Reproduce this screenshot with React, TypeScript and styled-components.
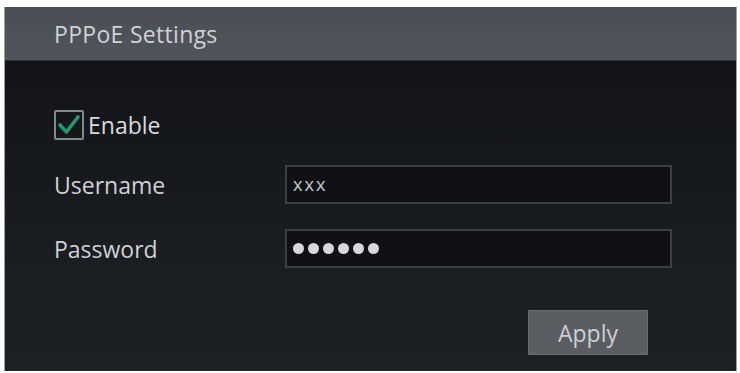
import styled, { createGlobalStyle } from "styled-components";

const GlobalStyle = createGlobalStyle`
  html, body {
    margin: 0;
    padding: 0;
    background: #ffffff;
  }
  body {
    font-family: "Open Sans", "Noto Sans", "Liberation Sans", sans-serif;
  }
`;

const App = () => {
  return (
    <>
      <GlobalStyle />
      <Page>
        <Panel>
          <Header>PPPoE Settings</Header>
          <Body>
            <CheckRow>
              <CheckBox>
                <svg width="24" height="22" viewBox="0 0 24 22">
                  <path
                    d="M3 11 L9.5 18 L21 3"
                    fill="none"
                    stroke="#1f9a6e"
                    strokeWidth="3.6"
                    strokeLinecap="round"
                    strokeLinejoin="round"
                  />
                </svg>
              </CheckBox>
              <CheckLabel>Enable</CheckLabel>
            </CheckRow>
            <FieldRow>
              <FieldLabel>Username</FieldLabel>
              <Field>xxx</Field>
            </FieldRow>
            <FieldRow>
              <FieldLabel>Password</FieldLabel>
              <Field>
                {Array.from({ length: 6 }).map((_, i) => (
                  <Dot key={i} />
                ))}
              </Field>
            </FieldRow>
            <Footer>
              <ApplyButton>Apply</ApplyButton>
            </Footer>
          </Body>
        </Panel>
      </Page>
    </>
  );
};

const Page = styled.div`
  padding: 7px 3px 2px 4px;
  height: 373px;
  box-sizing: border-box;
`;

const Panel = styled.div`
  height: 364px;
  display: flex;
  flex-direction: column;
  border-left: 1px solid #9a9da1;
  border-right: 1px solid #9a9da1;
  background: #17191d;
`;

const Header = styled.div`
  height: 53px;
  display: flex;
  align-items: center;
  padding-left: 49px;
  background: linear-gradient(#4a4e55, #50545b);
  border-bottom: 1px solid #2b2e33;
  color: #cfd2d6;
  font-size: 23px;
  letter-spacing: 0.3px;
`;

const Body = styled.div`
  flex: 1;
  display: flex;
  flex-direction: column;
  padding: 49px 64px 0 49px;
  background: linear-gradient(#121417, #1b1e22 70%, #1d2024);
`;

const CheckRow = styled.div`
  display: flex;
  align-items: center;
  gap: 4px;
  height: 30px;
`;

const CheckBox = styled.div`
  width: 26px;
  height: 26px;
  border: 2px solid #85898e;
  border-radius: 2px;
  display: flex;
  align-items: center;
  justify-content: center;
`;

const CheckLabel = styled.span`
  color: #d8dadd;
  font-size: 23px;
`;

const FieldRow = styled.div`
  display: flex;
  align-items: center;
  margin-top: 25px;
`;

const FieldLabel = styled.span`
  width: 231px;
  color: #cfd1d4;
  font-size: 23px;
`;

const Field = styled.div`
  flex: 1;
  height: 39px;
  box-sizing: border-box;
  border: 2px solid #3b3e43;
  background: #0f1114;
  display: flex;
  align-items: center;
  gap: 4px;
  padding-left: 6px;
  color: #bfc1c4;
  font-size: 19px;
  font-family: "Liberation Sans", sans-serif;
  letter-spacing: 2px;
`;

const Dot = styled.span`
  width: 11px;
  height: 11px;
  border-radius: 50%;
  background: #d6d8db;
`;

const Footer = styled.div`
  display: flex;
  justify-content: flex-end;
  margin-top: 42px;
  padding-right: 24px;
`;

const ApplyButton = styled.div`
  width: 120px;
  height: 45px;
  display: flex;
  align-items: center;
  justify-content: center;
  background: #5a5d62;
  border: 1px solid #6a6d71;
  box-sizing: border-box;
  color: #cdcfd2;
  font-size: 23px;
`;

export default App;
